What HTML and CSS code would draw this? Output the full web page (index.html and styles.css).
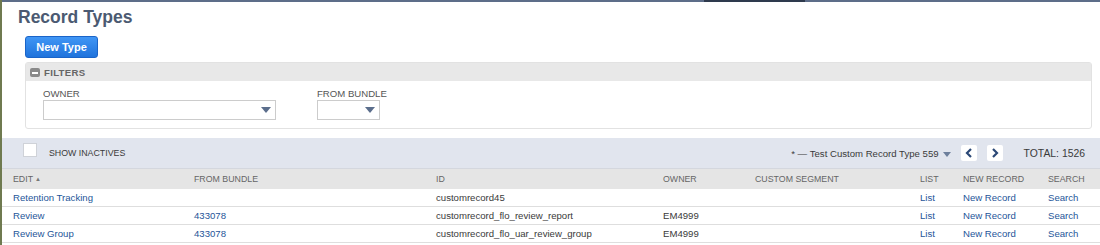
FILE: index.html
```html
<!DOCTYPE html>
<html lang="en">
  <head>
    <meta charset="UTF-8" />
    <title>Record Types</title>
    <link rel="stylesheet" href="styles.css">
  </head>
  <body>
    <div class="topbar"><span class="topbar-mark"></span></div>
    <div class="page">
      <h1 class="title">Record Types</h1>
      <div class="actions">
        <button class="btn-primary" type="button">New Type</button>
      </div>
      <div class="filters">
        <div class="filters-head">
          <span class="collapse-icon"></span>
          <span class="filters-title">FILTERS</span>
        </div>
        <div class="filters-body">
          <div class="field">
            <label>OWNER</label>
            <div class="select select-wide"><span class="caret"></span></div>
          </div>
          <div class="field">
            <label>FROM BUNDLE</label>
            <div class="select select-narrow"><span class="caret"></span></div>
          </div>
        </div>
      </div>
      <div class="toolbar">
        <div class="toolbar-left">
          <span class="checkbox"></span>
          <span class="toolbar-label">SHOW INACTIVES</span>
        </div>
        <div class="toolbar-right">
          <span class="range">* &mdash; Test Custom Record Type 559</span>
          <span class="range-caret"></span>
          <span class="pager-btn">
            <svg width="8" height="10" viewBox="0 0 8 10"><path d="M6 1 L2 5 L6 9" fill="none" stroke="#2b4876" stroke-width="2.2"/></svg>
          </span>
          <span class="pager-btn">
            <svg width="8" height="10" viewBox="0 0 8 10"><path d="M2 1 L6 5 L2 9" fill="none" stroke="#2b4876" stroke-width="2.2"/></svg>
          </span>
          <span class="total">TOTAL: 1526</span>
        </div>
      </div>
      <table class="list">
        <colgroup>
          <col style="width: 181px" />
          <col style="width: 242px" />
          <col style="width: 227px" />
          <col style="width: 92px" />
          <col style="width: 165px" />
          <col style="width: 43px" />
          <col style="width: 85px" />
          <col style="width: 63px" />
        </colgroup>
        <thead>
          <tr>
            <th>EDIT<span class="sort">&#9650;</span></th>
            <th>FROM BUNDLE</th>
            <th>ID</th>
            <th>OWNER</th>
            <th>CUSTOM SEGMENT</th>
            <th>LIST</th>
            <th>NEW RECORD</th>
            <th>SEARCH</th>
          </tr>
        </thead>
        <tbody>
          <tr>
            <td><a href="#">Retention Tracking</a></td>
            <td></td>
            <td>customrecord45</td>
            <td></td>
            <td></td>
            <td><a href="#">List</a></td>
            <td><a href="#">New Record</a></td>
            <td><a href="#">Search</a></td>
          </tr>
          <tr>
            <td><a href="#">Review</a></td>
            <td><a href="#">433078</a></td>
            <td>customrecord_flo_review_report</td>
            <td>EM4999</td>
            <td></td>
            <td><a href="#">List</a></td>
            <td><a href="#">New Record</a></td>
            <td><a href="#">Search</a></td>
          </tr>
          <tr>
            <td><a href="#">Review Group</a></td>
            <td><a href="#">433078</a></td>
            <td>customrecord_flo_uar_review_group</td>
            <td>EM4999</td>
            <td></td>
            <td><a href="#">List</a></td>
            <td><a href="#">New Record</a></td>
            <td><a href="#">Search</a></td>
          </tr>
        </tbody>
      </table>
    </div>
  </body>
</html>
```

FILE: styles.css
```css
body {
  margin: 0;
  font-family: 'Liberation Sans', Arial, sans-serif;
  color: #333;
  background-color: #fff;
  border-left: 2px solid #6f7a50;
  height: 245px;
  overflow: hidden;
}
.topbar {
  height: 2px;
  background-color: #5d6d89;
  display: flex;
}
.topbar-mark {
  width: 101px;
  margin-left: 702px;
  background-color: #2e3a4d;
}
.title {
  margin: 0;
  padding: 4px 0 0 16px;
  height: 30px;
  box-sizing: border-box;
  font-size: 17.5px;
  font-weight: bold;
  color: #4b5a72;
  line-height: 22px;
}
.actions {
  padding: 4px 0 0 23px;
  height: 26px;
  box-sizing: border-box;
}
.btn-primary {
  width: 73px;
  height: 22px;
  padding: 0;
  border: 1px solid #1a64c8;
  border-radius: 3px;
  background: linear-gradient(#4096f5, #1f73dc);
  color: #fff;
  font-family: inherit;
  font-size: 11px;
  font-weight: bold;
}
.filters {
  margin: 4px 8px 0 23px;
  border: 1px solid #e2e2e2;
  border-radius: 3px;
  height: 67px;
  box-sizing: border-box;
}
.filters-head {
  height: 18px;
  background-color: #e8e8e8;
  display: flex;
  align-items: center;
  padding-left: 4px;
}
.collapse-icon {
  width: 10px;
  height: 9px;
  border-radius: 2px;
  background-color: #8a8a8a;
  position: relative;
  margin-right: 4px;
}
.collapse-icon::after {
  content: "";
  position: absolute;
  left: 2px;
  right: 2px;
  top: 4px;
  height: 2px;
  background-color: #fff;
}
.filters-title {
  font-size: 9.6px;
  font-weight: bold;
  color: #666;
  letter-spacing: 0.3px;
}
.filters-body {
  display: flex;
  gap: 41px;
  padding: 7px 0 0 17px;
}
.field label {
  display: block;
  font-size: 9.6px;
  color: #555;
  line-height: 12px;
}
.select {
  height: 20px;
  border: 1px solid #ccc;
  box-sizing: border-box;
  display: flex;
  align-items: center;
  justify-content: flex-end;
  padding-right: 4px;
}
.select-wide {
  width: 233px;
}
.select-narrow {
  width: 63px;
}
.caret {
  width: 0;
  height: 0;
  border-left: 5px solid transparent;
  border-right: 5px solid transparent;
  border-top: 6px solid #5b6e8c;
}
.toolbar {
  margin-top: 9px;
  height: 30px;
  background-color: #e1e5ee;
  display: flex;
  align-items: center;
  justify-content: space-between;
  border-bottom: 1px solid #d4d7de;
}
.toolbar-left {
  display: flex;
  align-items: center;
  padding-left: 21px;
}
.checkbox {
  width: 14px;
  height: 14px;
  background-color: #fff;
  border: 1px solid #cfd2d8;
  box-sizing: border-box;
  margin-right: 12px;
  position: relative;
  top: -3px;
}
.toolbar-label {
  font-size: 8.8px;
  color: #3a3a3a;
}
.toolbar-right {
  display: flex;
  align-items: center;
  padding-right: 15px;
  font-size: 9.6px;
  color: #3a3a3a;
}
.range-caret {
  width: 0;
  height: 0;
  border-left: 4px solid transparent;
  border-right: 4px solid transparent;
  border-top: 5px solid #6d7f9c;
  margin: 2px 0 0 4px;
}
.pager-btn {
  width: 16px;
  height: 16px;
  background-color: #fff;
  border-radius: 2px;
  display: flex;
  align-items: center;
  justify-content: center;
  margin-left: 10px;
}
.pager-btn:first-of-type {
  margin-left: 13px;
}
.total {
  margin-left: 21px;
  font-size: 10.4px;
}
.list {
  width: 1098px;
  table-layout: fixed;
  border-collapse: collapse;
}
.list th {
  height: 20px;
  background-color: #e5e5e5;
  text-align: left;
  font-weight: normal;
  font-size: 8.8px;
  color: #666;
  padding: 0 0 0 11px;
  white-space: nowrap;
}
.sort {
  font-size: 6px;
  margin-left: 2px;
  color: #777;
  vertical-align: 1px;
}
.list td {
  height: 17px;
  padding: 0 0 0 11px;
  font-size: 9.6px;
  color: #3a3a3a;
  border-bottom: 1px solid #dedede;
  white-space: nowrap;
}
.list a {
  color: #255599;
  text-decoration: none;
}
```
